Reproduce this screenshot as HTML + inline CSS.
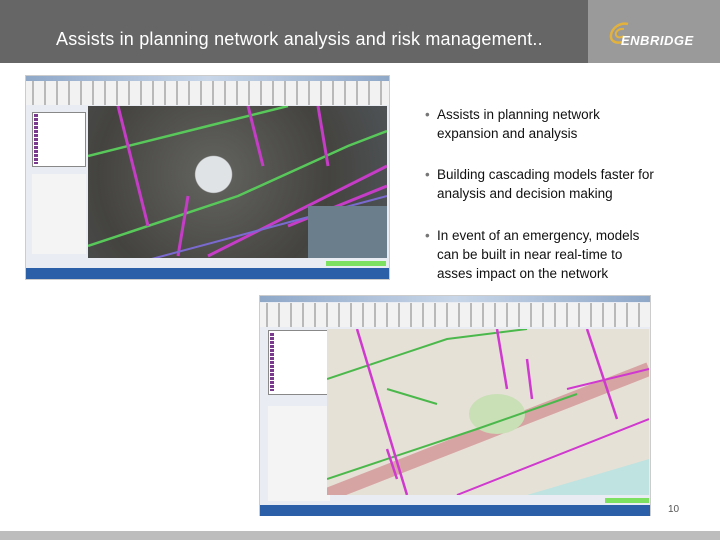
<!DOCTYPE html>
<html><head><meta charset="utf-8"><style>
*{margin:0;padding:0;box-sizing:border-box}
body{width:720px;height:540px;background:#fff;position:relative;overflow:hidden;font-family:"Liberation Sans",sans-serif}
.a{position:absolute}
.hdr{left:0;top:0;width:588px;height:63px;background:#666}
.logo{left:588px;top:0;width:132px;height:63px;background:#9a9a9a}
.title{left:56px;top:29px;color:#fff;font-size:18px;letter-spacing:0.2px;white-space:nowrap}
.bul{left:425px;color:#111;font-size:13.5px;line-height:18.8px;width:270px}
.bul span{position:absolute;left:0;color:#777}
.bul div{margin-left:12px}
.foot{left:0;top:531px;width:720px;height:9px;background:#bdbdbd}
</style></head><body>
<div class="a hdr"></div>
<div class="a title">Assists in planning network analysis and risk management..</div>
<div class="a logo">
 <svg class="a" style="left:18px;top:20px" width="30" height="30" viewBox="0 0 30 30"><path d="M22 4C14 2 6 8 5 15c-1 6 5 9 11 7" stroke="#e3b23c" stroke-width="2.5" fill="none"/><path d="M18 9c-5-1-9 3-8 6 1 3 5 3 8 1" stroke="#e3b23c" stroke-width="2" fill="none"/></svg>
 <div class="a" style="left:33px;top:33px;color:#fff;font-weight:bold;font-style:italic;font-size:13px;letter-spacing:0.5px">ENBRIDGE</div>
</div>

<!-- screenshot 1 -->
<div class="a" style="left:25px;top:75px;width:365px;height:205px;background:#e9edf3;border:1px solid #ccc">
 <div class="a" style="left:0;top:0;width:363px;height:5px;background:linear-gradient(90deg,#8fa8c8,#c8d6e8,#8fa8c8)"></div>
 <div class="a" style="left:0;top:5px;width:363px;height:24px;background:repeating-linear-gradient(90deg,#f2f2f2 0 6px,#b9b9b9 6px 8px,#f2f2f2 8px 12px)"></div>
 <div class="a" style="left:6px;top:36px;width:54px;height:55px;background:#fff;border:1px solid #888"></div>
 <div class="a" style="left:8px;top:38px;width:4px;height:50px;background:repeating-linear-gradient(#7a3b8f 0 3px,#fff 3px 4px)"></div>
 <div class="a" style="left:6px;top:98px;width:54px;height:80px;background:#f4f4f4"></div>
 <div class="a" style="left:62px;top:30px;width:299px;height:152px;background:radial-gradient(circle at 42% 45%,#dfe3e6 0 18px,#5e5e5a 19px,#44433f 60%,#4f5458 100%)">
  <svg width="299" height="152" style="position:absolute;left:0;top:0">
   <path d="M0 50L120 20 200 0M0 140L150 90 260 40 299 25" stroke="#58c85a" stroke-width="2.5" fill="none"/>
   <path d="M30 0L60 120M90 150L100 90M160 0L175 60M120 150L299 60M200 120L299 80M230 0L240 60" stroke="#c53dc7" stroke-width="3" fill="none"/>
   <path d="M0 170L299 90" stroke="#7a6ad0" stroke-width="2" fill="none"/>
   <rect x="220" y="100" width="79" height="52" fill="#6a7e8c"/>
  </svg>
 </div>
 <div class="a" style="left:0;top:192px;width:363px;height:11px;background:#2b5fa8"></div>
 <div class="a" style="left:300px;top:185px;width:60px;height:5px;background:#7ee060"></div>
</div>

<!-- screenshot 2 -->
<div class="a" style="left:259px;top:295px;width:392px;height:221px;background:#e9edf3;border:1px solid #ccc">
 <div class="a" style="left:0;top:0;width:390px;height:6px;background:linear-gradient(90deg,#8fa8c8,#c8d6e8,#8fa8c8)"></div>
 <div class="a" style="left:0;top:7px;width:390px;height:24px;background:repeating-linear-gradient(90deg,#f2f2f2 0 6px,#b9b9b9 6px 8px,#f2f2f2 8px 12px)"></div>
 <div class="a" style="left:8px;top:34px;width:60px;height:65px;background:#fff;border:1px solid #888"></div>
 <div class="a" style="left:10px;top:37px;width:4px;height:58px;background:repeating-linear-gradient(#7a3b8f 0 3px,#fff 3px 4px)"></div>
 <div class="a" style="left:8px;top:110px;width:62px;height:95px;background:#f4f4f4"></div>
 <div class="a" style="left:67px;top:33px;width:322px;height:166px;background:#e6e1d6">
  <svg width="322" height="166" style="position:absolute;left:0;top:0">
   <path d="M0 166L322 40" stroke="#d7a4a4" stroke-width="14" fill="none"/>
   <path d="M200 166L322 130 322 166Z" fill="#bfe3e0"/>
   <ellipse cx="170" cy="85" rx="28" ry="20" fill="#c9dfb6"/>
   <path d="M0 50L120 10 200 0M0 150L150 100 250 65M60 60L110 75" stroke="#4bb84c" stroke-width="2" fill="none"/>
   <path d="M30 0L80 166M170 0L180 60M260 0L290 90M200 30L205 70M60 120L70 150" stroke="#d039cf" stroke-width="2.5" fill="none"/>
   <path d="M130 166L322 90M240 60L322 40" stroke="#d039cf" stroke-width="2" fill="none"/>
  </svg>
 </div>
 <div class="a" style="left:0;top:209px;width:390px;height:11px;background:#2b5fa8"></div>
 <div class="a" style="left:345px;top:202px;width:44px;height:5px;background:#7ee060"></div>
</div>

<div class="a bul" style="top:106px"><span>•</span><div>Assists in planning network<br>expansion and analysis</div></div>
<div class="a bul" style="top:166px"><span>•</span><div>Building cascading models faster for<br>analysis and decision making</div></div>
<div class="a bul" style="top:227px"><span>•</span><div>In event of an emergency, models<br>can be built in near real-time to<br>asses impact on the network</div></div>
<div class="a" style="left:668px;top:504px;font-size:10px;color:#555">10</div>
<div class="a foot"></div>
</body></html>
